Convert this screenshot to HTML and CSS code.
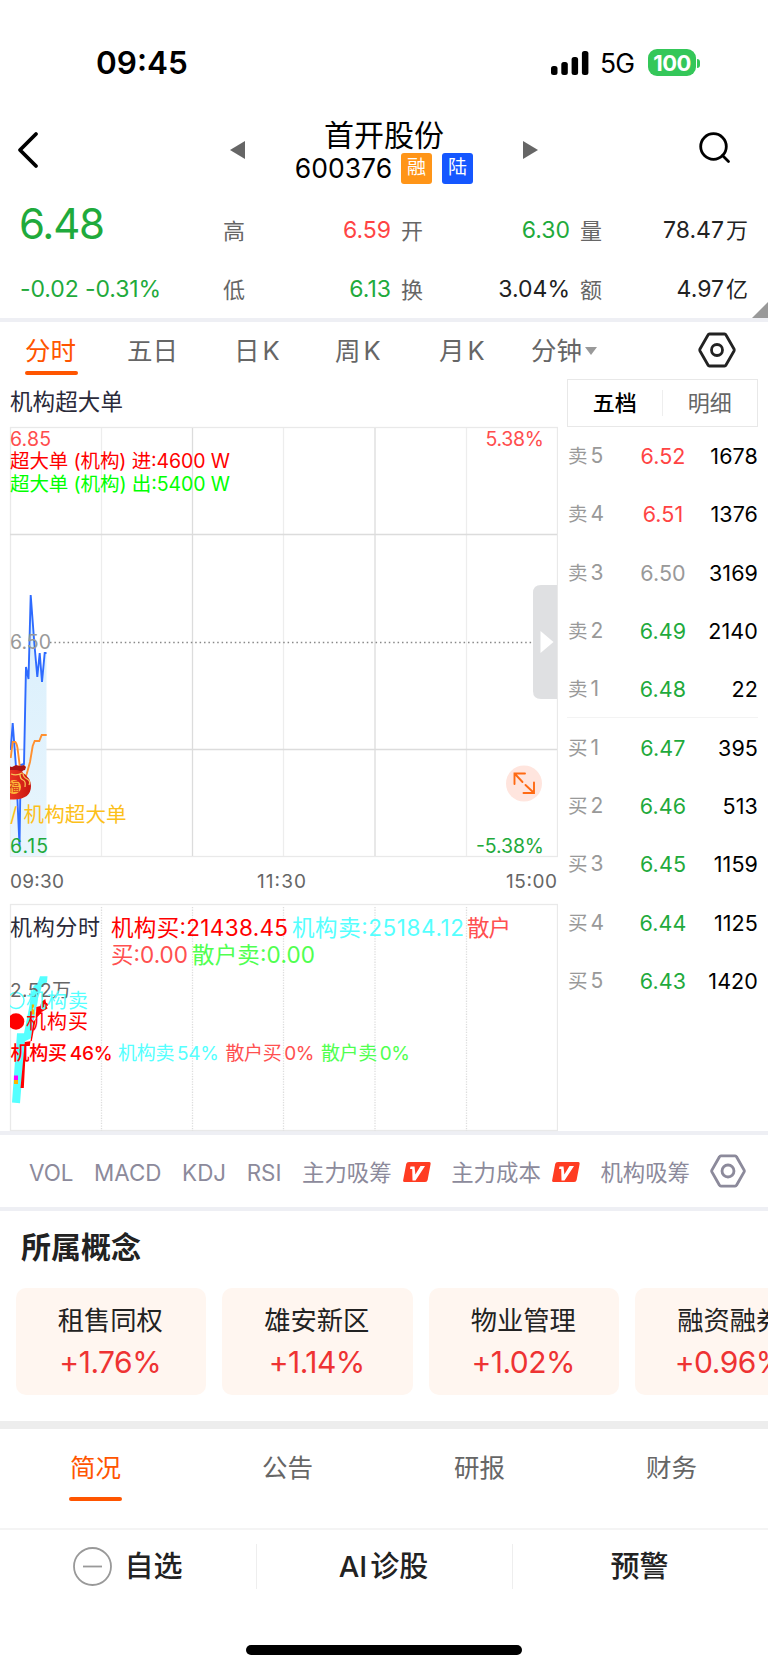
FILE: index.html
```html
<!DOCTYPE html>
<html lang="zh-CN">
<head>
    <meta charset="UTF-8">
    <meta name="viewport" content="width=device-width, initial-scale=1.0">
    <title>首开股份 600376</title>
    <link rel="stylesheet" href="styles.css">
</head>
<body>
    <div class="status-bar">
        <span class="clock">09:45</span>
        <svg class="signal" width="38" height="24" viewBox="0 0 38 24">
            <rect x="0" y="15" width="6.5" height="9" rx="2.5"/>
            <rect x="10.3" y="11" width="6.5" height="13" rx="2.5"/>
            <rect x="20.6" y="6" width="6.5" height="18" rx="2.5"/>
            <rect x="30.9" y="0" width="6.5" height="24" rx="2.5"/>
        </svg>
        <span class="network">5G</span>
        <span class="battery">100</span>
        <span class="battery-tip"></span>
    </div>

    <header class="nav">
        <svg class="back" width="22" height="38" viewBox="0 0 22 38"><path d="M19 3L3 19l16 16"/></svg>
        <svg class="arrow prev" width="15" height="18" viewBox="0 0 15 18"><path d="M15 0v18L0 9z"/></svg>
        <div class="stock">
            <h1>首开股份</h1>
            <div class="code"><span class="num">600376</span><span class="badge rong">融</span><span class="badge lu">陆</span></div>
        </div>
        <svg class="arrow next" width="15" height="18" viewBox="0 0 15 18"><path d="M0 0v18l15-9z"/></svg>
        <svg class="search" width="32" height="32" viewBox="0 0 32 32"><circle cx="14.5" cy="14.5" r="12.8"/><path d="M23.5 23.5l6 6"/></svg>
    </header>

    <section class="quote">
        <div class="price green">6.48</div>
        <div class="label">高</div><div class="value red">6.59</div>
        <div class="label">开</div><div class="value green">6.30</div>
        <div class="label">量</div><div class="value">78.47<i>万</i></div>
        <div class="change green">-0.02 -0.31%</div>
        <div class="label">低</div><div class="value green">6.13</div>
        <div class="label">换</div><div class="value">3.04%</div>
        <div class="label">额</div><div class="value">4.97<i>亿</i></div>
        <span class="corner"></span>
    </section>

    <nav class="periods">
        <span class="active">分时</span>
        <span>五日</span>
        <span>日<b>K</b></span>
        <span>周<b>K</b></span>
        <span>月<b>K</b></span>
        <span>分钟<em class="caret"></em></span>
        <svg class="hex" width="38" height="36" viewBox="0 0 38 36"><path d="M11.5 2h15q1 0 1.5 1l8 14q.5 1 0 2l-8 14q-.5 1-1.5 1h-15q-1 0-1.5-1L2 19q-.5-1 0-2l8-14q.5-1 1.5-1z"/><circle cx="19" cy="18" r="5.5"/></svg>
    </nav>

    <main class="board">
        <div class="charts">
            <svg class="chart" width="558" height="754" viewBox="0 378 558 754">
                <defs>
                    <clipPath id="plot"><rect x="10" y="427" width="548" height="704"/></clipPath>
                    <linearGradient id="area" x1="0" y1="0" x2="0" y2="1"><stop offset="0" stop-color="#d9effc"/><stop offset="1" stop-color="#e8f5fd"/></linearGradient>
                    <linearGradient id="bag" x1="0" y1="0" x2="1" y2="0"><stop offset="0" stop-color="#f5402c"/><stop offset="1" stop-color="#c8150f"/></linearGradient>
                </defs>

                <!-- 网格 -->
                <g class="grid">
                    <rect class="frame" x="10.5" y="427.5" width="547" height="429"/>
                    <path class="light" d="M101.5 428v428M283.5 428v428M466.5 428v428"/>
                    <path d="M192.5 428v428M375 428v428M10 534.5h547M10 749.5h547"/>
                    <rect class="frame" x="10.5" y="904.5" width="547" height="226"/>
                    <path class="dots" d="M101.5 907v224M192.5 907v224M283.5 907v224M375 907v224M466.5 907v224"/>
                </g>

                <text class="title" x="10" y="410" textLength="113">机构超大单</text>

                <!-- 分时走势 -->
                <g clip-path="url(#plot)">
                    <path fill="url(#area)" d="M10.7 750l2-27 3.3 44 3.5 79 1.2-81 3.3-1L26 667l2.5 12 2.2-84 3.6 48 3 34 2.4-24 2.3 29 2.7-29h1.8v203h-36z"/>
                    <path class="price-line" d="M10.7 750l2-27 3.3 44 3.5 79 1.2-81 3.3-1L26 667l2.5 12 2.2-84 3.6 48 3 34 2.4-24 2.3 29 2.7-29h1.8"/>
                    <path class="avg-line" d="M10.7 758l2-16h2.6q2 2 2.7 10l2 16 4 13 2.7-7L30 762l2.7-16 2-5h4.6l2.4-6h5"/>
                    <path fill="url(#bag)" d="M4 767h21l-3 5q9 6 9 14 0 13-17 13.500H2z"/>
                    <path fill="#a91414" d="M4 767l4-1 4 1 4-2 4 1 4-1 2 2-1 3-4 1-4-1H6z"/>
                    <circle cx="14" cy="787" r="7" fill="#ffb739"/>
                    <text x="8.5" y="791" class="fu">福</text>
                    <path class="rope" d="M11 774q6 2 11-1M20 774q0 5 3 6t2 7M23 773q0 4 4 6t2 6"/>
                </g>
                <path class="base-line" d="M50 642.5h504"/>
                <text class="grey" x="10" y="648.5" textLength="41">6.50</text>
                <text class="rise" x="10" y="445.5" textLength="41">6.85</text>
                <text class="rise" x="485.5" y="445.5" textLength="58.5">5.38%</text>
                <text class="in" x="10" y="468" textLength="220">超大单 (机构) 进:4600 W</text>
                <text class="out" x="10" y="491" textLength="220">超大单 (机构) 出:5400 W</text>
                <text class="gold" x="10" y="822">/</text>
                <text class="gold" x="23.5" y="822" textLength="103">机构超大单</text>
                <text class="fall" x="10" y="852.5" textLength="38">6.15</text>
                <text class="fall" x="476" y="852.5" textLength="68">-5.38%</text>

                <path class="handle" d="M557 585h-16q-8 0-8 8v98q0 8 8 8h16z"/>
                <path fill="#fff" d="M540.5 631l13 11-13 11z"/>
                <circle cx="524" cy="783.5" r="18" fill="#ffe5de"/>
                <path class="expand" d="M514.5 784v-10.500h10.500M515 774l7.500 8M534 782.500V793h-10.500M533.500 792.500l-8-7.500"/>

                <text class="axis" x="10" y="888" textLength="54">09:30</text>
                <text class="axis" x="257" y="888" textLength="49">11:30</text>
                <text class="axis" x="506" y="888" textLength="51">15:00</text>

                <!-- 机构分时 -->
                <text class="title small" x="10" y="935" textLength="90">机构分时</text>
                <g class="legend">
                    <text x="111" y="936" fill="#f00" textLength="177">机构买:21438.45</text>
                    <text x="292" y="936" fill="#5ff" textLength="172">机构卖:25184.12</text>
                    <text x="467" y="936" fill="#ff5050" textLength="44">散户</text>
                    <text x="111" y="963" fill="#ff5050" textLength="77">买:0.00</text>
                    <text x="192" y="963" fill="#50ff50" textLength="123">散户卖:0.00</text>
                </g>
                <g clip-path="url(#plot)">
                    <path fill="#5ff" d="M12 1102.5l8 .8 5-62 6-3 6-37 5-15 5-4 .5-6h-7.500l-2 6-4.500 4-2 8-3.500 19-4 20h-7z"/>
                    <path fill="red" d="M20.5 1088h3.300l2.200-42h3.800l3.500-24 3-4 5-5 1-4 4-5-1-5-4 3-1 4-4 1-.5 12-4 22-7 1z"/>
                    <path class="curl" d="M41 1011l5-3-2-5 4 2"/>
                    <path fill="#ffb400" d="M31.5 1004.5h2.700v10h-2.700zM14 1080h4v4h-4z"/>
                    <path fill="#f0f" d="M14 1075.5h4v4.500h-4z"/>
                    <circle cx="16" cy="1000.5" r="8" fill="none" stroke="#5ff" stroke-width="1.5"/>
                    <circle cx="16" cy="1021.5" r="8.3" fill="red"/>
                </g>
                <text class="axis" x="10" y="997" textLength="61">2.52万</text>
                <g class="marks">
                    <text x="26" y="1008" fill="#5ff" textLength="62">机构卖</text>
                    <text x="26" y="1029" fill="red" textLength="62">机构买</text>
                </g>
                <g class="share">
                    <text x="10.5" y="1060" fill="#f00" textLength="102" class="strong">机构买<tspan dx="3">46%</tspan></text>
                    <text x="118" y="1060" fill="#5ff" textLength="101">机构卖<tspan dx="3">54%</tspan></text>
                    <text x="225.5" y="1060" fill="#ff5050" textLength="89">散户买<tspan dx="3">0%</tspan></text>
                    <text x="321" y="1060" fill="#50ff50" textLength="89">散户卖<tspan dx="3">0%</tspan></text>
                </g>
            </svg>
        </div>

        <aside class="orders">
            <div class="order-tabs"><span class="on">五档</span><span>明细</span></div>
            <ul>
                <li><span>卖<i>5</i></span><b class="red">6.52</b><strong>1678</strong></li>
                <li><span>卖<i>4</i></span><b class="red">6.51</b><strong>1376</strong></li>
                <li><span>卖<i>3</i></span><b class="flat">6.50</b><strong>3169</strong></li>
                <li><span>卖<i>2</i></span><b class="green">6.49</b><strong>2140</strong></li>
                <li class="last-sell"><span>卖<i>1</i></span><b class="green">6.48</b><strong>22</strong></li>
                <li><span>买<i>1</i></span><b class="green">6.47</b><strong>395</strong></li>
                <li><span>买<i>2</i></span><b class="green">6.46</b><strong>513</strong></li>
                <li><span>买<i>3</i></span><b class="green">6.45</b><strong>1159</strong></li>
                <li><span>买<i>4</i></span><b class="green">6.44</b><strong>1125</strong></li>
                <li><span>买<i>5</i></span><b class="green">6.43</b><strong>1420</strong></li>
            </ul>
        </aside>
    </main>

    <div class="indicators">
        <span>VOL</span>
        <span>MACD</span>
        <span>KDJ</span>
        <span>RSI</span>
        <span>主力吸筹</span>
        <svg class="vip" width="28" height="20" viewBox="0 0 28 20"><path fill="#ff3c22" d="M6 0h20q2 0 1.600 2l-3 16q-.4 2-2.400 2H1.500Q-.3 20 .2 18l3-16q.4-2 2.800-2z"/><path fill="#fff" d="M7.500 4.500h4l.9 8L17.500 4H22L12.500 18.500h-3L9.200 7H7z"/></svg>
        <span>主力成本</span>
        <svg class="vip" width="28" height="20" viewBox="0 0 28 20"><path fill="#ff3c22" d="M6 0h20q2 0 1.600 2l-3 16q-.4 2-2.400 2H1.500Q-.3 20 .2 18l3-16q.4-2 2.800-2z"/><path fill="#fff" d="M7.500 4.500h4l.9 8L17.500 4H22L12.500 18.500h-3L9.200 7H7z"/></svg>
        <span>机构吸筹</span>
        <svg class="hex" width="36" height="36" viewBox="0 0 38 36"><path d="M11.5 2h15q1 0 1.5 1l8 14q.5 1 0 2l-8 14q-.5 1-1.5 1h-15q-1 0-1.5-1L2 19q-.5-1 0-2l8-14q.5-1 1.5-1z"/><circle cx="19" cy="18" r="6.3"/></svg>
    </div>

    <section class="concepts">
        <h2>所属概念</h2>
        <div class="cards">
            <div class="card"><p>租售同权</p><b>+1.76%</b></div>
            <div class="card"><p>雄安新区</p><b>+1.14%</b></div>
            <div class="card"><p>物业管理</p><b>+1.02%</b></div>
            <div class="card"><p>融资融券</p><b>+0.96%</b></div>
        </div>
    </section>

    <nav class="info-tabs">
        <span class="active">简况</span>
        <span>公告</span>
        <span>研报</span>
        <span>财务</span>
    </nav>

    <footer class="actions">
        <div><svg width="39" height="39" viewBox="0 0 39 39"><circle cx="19.5" cy="19.5" r="18.5"/><path d="M10 19.5h19"/></svg><span class="fav">自选</span></div>
        <div><span class="ai">AI</span>诊股</div>
        <div>预警</div>
    </footer>
    <div class="home-bar"></div>
</body>
</html>
```
FILE: styles.css
```css
* {
    box-sizing: border-box;
    margin: 0;
    padding: 0;
}
body {
    width: 768px;
    height: 1670px;
    overflow: hidden;
    background: #fff;
    color: #000;
    font-family: Inter, "Noto Sans CJK SC", sans-serif;
    white-space: nowrap;
}
i, em {
    font-style: normal;
}
b {
    font-weight: 400;
}
svg {
    display: block;
    flex: none;
}
.red { color: #ff4444; }
.green { color: #1faa3c; }
.flat { color: #999; }

/* Barra de estado */
.status-bar {
    display: flex;
    align-items: center;
    height: 112px;
    padding: 14px 0 0 96px;
}
.clock {
    width: 455px;
    margin-top: -2px;
    font-size: 31.5px;
    font-weight: 600;
}
.network {
    width: 48px;
    margin: -1px 0 0 10px;
    padding-left: 1px;
    font-size: 26.5px;
    letter-spacing: -0.8px;
}
.signal {
    margin-top: -1px;
}
.battery {
    width: 48px;
    height: 27px;
    margin: -2px 1px 0;
    border-radius: 9px;
    background: #34c759;
    color: #fff;
    font-size: 22px;
    font-weight: 700;
    line-height: 28px;
    text-align: center;
    letter-spacing: -0.5px;
}
.battery-tip {
    width: 3px;
    height: 9px;
    border-radius: 0 3px 3px 0;
    background: #34c759;
}

/* Cabecera */
.nav {
    display: flex;
    align-items: center;
    height: 76px;
    padding: 0 37px 0 17px;
}
.back, .search {
    fill: none;
    stroke: #000;
    stroke-width: 3.8;
    stroke-linecap: round;
    stroke-linejoin: round;
}
.search {
    margin-left: auto;
    margin-top: -5px;
    stroke-width: 2.8;
}
.arrow {
    fill: #666;
}
.prev {
    margin-left: 191px;
}
.stock {
    width: 278px;
    text-align: center;
}
.stock h1 {
    height: 36px;
    font-size: 30px;
    font-weight: 400;
    line-height: 38px;
}
.code {
    display: flex;
    align-items: center;
    justify-content: center;
    height: 32px;
    font-size: 26.5px;
}
.badge {
    width: 31px;
    height: 31px;
    margin-left: 10px;
    border-radius: 3px;
    color: #fff;
    font-size: 19px;
    line-height: 30px;
}
.num {
    margin-right: -1px;
}
.rong { background: #ff9518; }
.lu { background: #1557ff; }

/* Cotización */
.quote {
    position: relative;
    display: grid;
    grid-template-columns: 203px 40px 128px 40px 139px 40px 138px;
    grid-template-rows: 68px 60px;
    align-items: center;
    height: 134px;
    padding: 2px 0 0 20px;
    border-bottom: 4px solid #eeeff4;
}
.price {
    margin: 0 0 0 -1px;
    font-size: 42px;
    line-height: 66px;
    letter-spacing: -1.3px;
}
.change {
    padding-top: 2px;
    font-size: 23px;
    letter-spacing: -0.1px;
}
.label {
    color: #666;
    font-size: 22px;
}
.label + .value {
    color: #222;
}
.label + .value.red { color: #ff4444; }
.label + .value.green { color: #1faa3c; }
.value {
    padding-top: 2px;
    font-size: 23px;
    line-height: 32px;
    text-align: right;
}
.quote .label:nth-of-type(-n+7) {
    padding-top: 9px;
}
.quote .value:nth-of-type(-n+7) {
    padding-top: 12px;
}
.value i {
    margin-left: 2px;
    font-size: 22px;
}
.label:nth-child(4), .label:nth-child(11) { padding-left: 10px; }
.label:nth-child(6), .label:nth-child(13) { padding-left: 10px; }
.corner {
    position: absolute;
    right: 0;
    bottom: 0;
    border-left: 16px solid transparent;
    border-bottom: 16px solid #999;
}

/* Periodos */
.periods {
    display: grid;
    grid-template-columns: 102px 107px 101px 104px 92px 167px 38px;
    align-items: center;
    height: 56px;
    padding-left: 25px;
    color: #666;
    font-size: 25.5px;
}
.periods span {
    height: 56px;
    line-height: 58px;
}
.periods b {
    margin-left: 3px;
}
.periods .active::after {
    content: "";
    display: block;
    width: 53px;
    height: 4px;
    margin-top: -9px;
    border-radius: 2px;
}
.active {
    color: #ff5500;
}
.active::after {
    background: #ff5500;
}
.caret {
    display: inline-block;
    margin: 0 0 5px 3px;
    border: 6px solid transparent;
    border-top: 8px solid #999;
    border-bottom: 0;
}
.hex {
    fill: none;
    stroke: #222;
    stroke-width: 2.8;
}

/* Gráficos */
.board {
    display: flex;
    height: 753px;
}
.chart {
    font-size: 19.5px;
}
.grid path, .frame {
    fill: none;
    stroke: #dcdcdc;
    stroke-width: 1.3;
}
.grid .light {
    stroke: #ededed;
}
.grid .frame {
    stroke: #e9e9e9;
}
.grid .dots {
    stroke: #ddd;
    stroke-dasharray: 1.3 1.3;
}
.title {
    fill: #2a2a3a;
    font-size: 22.5px;
}
.title.small {
    font-size: 22px;
}
.grey { fill: #999; }
.rise { fill: #ff4d4d; }
.fall { fill: #1faa3c; }
.in, .out {
    fill: #f00;
    font-size: 19.5px;
}
.out { fill: #0f0; }
.gold {
    fill: #fcc01a;
    font-size: 20.5px;
}
.axis {
    fill: #666;
    font-size: 19px;
}
.price-line, .avg-line, .base-line, .rope, .expand, .curl {
    fill: none;
    stroke: #2e6bff;
    stroke-width: 1.9;
}
.avg-line { stroke: #ff9030; }
.curl {
    stroke: #f00;
    stroke-width: 2.5;
}
.base-line {
    stroke: #888;
    stroke-width: 1.3;
    stroke-dasharray: 1.5 2.9;
}
.rope {
    stroke: #f7c155;
    stroke-width: 1.3;
}
.fu {
    fill: #d63817;
    font-size: 11px;
}
.expand {
    stroke: #ff6a13;
    stroke-linecap: round;
}
.handle { fill: #dfe0e2; }
.legend { font-size: 22.5px; }
.marks { font-size: 20px; }
.share { font-size: 19px; }
.strong { font-weight: 500; }

/* Libro de órdenes */
.orders {
    width: 191px;
    margin-left: 9px;
}
.order-tabs {
    display: grid;
    grid-template-columns: 1fr 1fr;
    height: 48px;
    margin-top: 1px;
    padding: 10px 0;
    border: 1px solid #e8e8e8;
    color: #666;
    font-size: 22px;
    line-height: 26px;
    text-align: center;
}
.order-tabs .on {
    border-right: 1px solid #eee;
    color: #000;
    font-weight: 500;
}
.orders ul {
    list-style: none;
}
.orders li {
    display: grid;
    grid-template-columns: 69px 52px 69px;
    align-items: center;
    height: 58.3px;
    padding-left: 1px;
    font-size: 21.5px;
    letter-spacing: 0.1px;
}
.orders li b {
    text-align: center;
}
.orders .last-sell {
    border-bottom: 1px solid #f3f3f3;
}
.orders li span {
    color: #999;
    font-size: 19.5px;
    line-height: 26px;
}
.orders li i {
    margin-left: 3px;
    font-size: 21px;
}
.orders strong {
    font-weight: 400;
    text-align: right;
}

/* Indicadores */
.indicators {
    display: flex;
    align-items: center;
    height: 80px;
    padding-left: 29px;
    border-top: 4px solid #eeeff4;
    border-bottom: 4px solid #eeeff4;
    color: #8c8a9b;
    font-size: 22.4px;
}
.indicators span {
    height: 30px;
    margin-right: 20.6px;
    padding-top: 2px;
    line-height: 30px;
}
.indicators .vip {
    margin: 2px 20px 0 -9px;
}
.indicators .hex {
    margin: 0 0 0 -1px;
    stroke: #8c8a9b;
    stroke-width: 3;
}

/* Conceptos */
.concepts {
    height: 218px;
    border-bottom: 8px solid #ededed;
}
.concepts h2 {
    height: 77px;
    padding-left: 21px;
    color: #222;
    font-size: 30px;
    font-weight: 700;
    line-height: 73px;
}
.cards {
    display: flex;
    gap: 16px;
    padding-left: 15.5px;
}
.card {
    flex: none;
    width: 190.5px;
    height: 107px;
    padding-top: 12px;
    border-radius: 10px;
    background: #fff6f0;
    color: #222;
    text-align: center;
}
.card p {
    height: 42px;
    margin-left: -1px;
    font-size: 26.3px;
    line-height: 41px;
}
.card b {
    display: block;
    margin-left: -1px;
    color: #ee3333;
    font-size: 30px;
    line-height: 41px;
    letter-spacing: -0.5px;
}

/* Pestañas inferiores */
.info-tabs {
    display: grid;
    grid-template-columns: repeat(4, 1fr);
    height: 99px;
    color: #666;
    font-size: 25.5px;
    line-height: 77px;
    text-align: center;
}
.info-tabs .active::after {
    content: "";
    display: block;
    width: 53px;
    height: 4px;
    margin: -9px auto 0;
    border-radius: 2px;
}
.info-tabs span {
    padding-right: 1px;
}
.actions {
    display: grid;
    grid-template-columns: repeat(3, 1fr);
    height: 116px;
    padding-top: 14px;
    border-top: 2px solid #f4f4f4;
    color: #222;
    font-size: 29px;
    font-weight: 500;
    line-height: 41px;
}
.actions div {
    display: flex;
    align-items: center;
    justify-content: center;
    height: 45px;
    padding-right: 2px;
}
.actions div + div {
    border-left: 1.5px solid #eee;
}
.actions svg {
    margin: 0 12px 0 2px;
    fill: none;
    stroke: #999;
    stroke-width: 1.8;
}
.ai {
    margin-right: 3px;
}
.home-bar {
    width: 276px;
    height: 10px;
    margin: 1px 0 0 246px;
    border-radius: 5px;
    background: #000;
}
```
